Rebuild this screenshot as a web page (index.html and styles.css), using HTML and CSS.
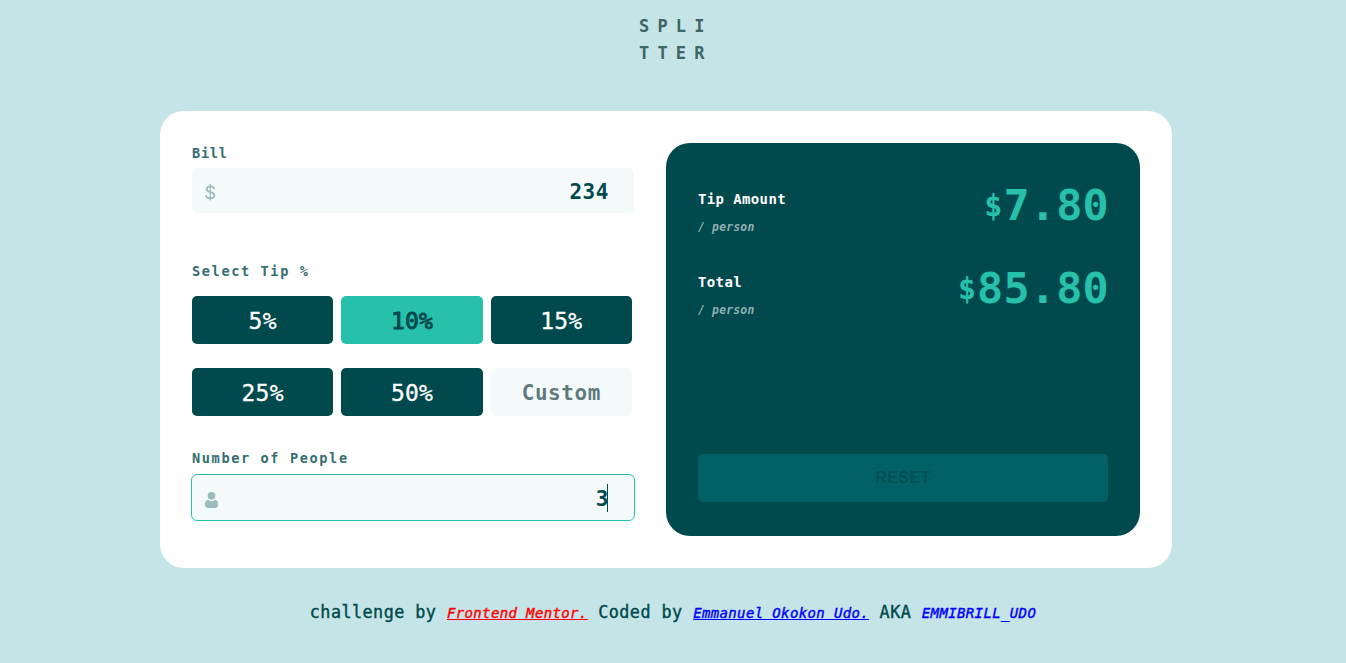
FILE: index.html
```html
<!DOCTYPE html>
<html lang="en">
<head>
<meta charset="utf-8">
<title>Splitter | Tip calculator</title>
<link rel="stylesheet" href="styles.css">
</head>
<body>
<header class="logo"><div>SPLI</div><div>TTER</div></header>
<main class="card">
  <section class="form">
    <div class="label label-bill">Bill</div>
    <div class="field">
      <svg class="dollar" width="11" height="17" viewBox="0 0 11 17"><path fill="none" stroke="#9dbbbd" stroke-width="1.9" d="M9.2 5.1C9.1 3.4 7.6 2.4 5.3 2.4S1.7 3.5 1.7 5.1c0 1.8 1.3 2.5 3.6 3 2.6.5 4 1.3 4 3.1 0 1.9-1.6 3-4 3S1.200 13 1.100 11.200"/><path fill="none" stroke="#9dbbbd" stroke-width="1.300" d="M5.300 0v16.500"/></svg>
      <span class="value">234</span>
    </div>
    <div class="label label-tip">Select Tip %</div>
    <div class="tips">
      <div class="tip">5%</div><div class="tip active">10%</div><div class="tip">15%</div>
      <div class="tip">25%</div><div class="tip">50%</div><div class="tip custom">Custom</div>
    </div>
    <div class="label label-people">Number of People</div>
    <div class="field focused">
      <svg class="person" width="13" height="16" viewBox="0 0 13 16"><path fill="#9dbbbd" d="M9.57 7.98c.67 0 1.24.1 1.71.34.47.24.83.58 1.1 1.05.26.45.43.96.51 1.54.08.57.11 1.2.11 1.88 0 .9-.27 1.65-.8 2.27-.53.62-1.19.94-1.93.94H2.73c-.75 0-1.4-.32-1.93-.94A3.39 3.39 0 0 1 0 12.8c0-.68.04-1.3.11-1.88.08-.58.25-1.09.51-1.54.27-.47.63-.81 1.1-1.05.47-.24 1.04-.35 1.71-.35A4.42 4.42 0 0 0 6.5 9.2a4.42 4.42 0 0 0 3.07-1.22zM6.5 0a3.85 3.85 0 1 1 0 7.7 3.85 3.85 0 0 1 0-7.7z"/></svg>
      <span class="value">3</span><span class="caret"></span>
    </div>
  </section>
  <section class="result">
    <div class="row">
      <div><div class="name">Tip Amount</div><div class="per">/ person</div></div>
      <div class="amount"><span class="currency">$</span>7.80</div>
    </div>
    <div class="row">
      <div><div class="name">Total</div><div class="per">/ person</div></div>
      <div class="amount"><span class="currency">$</span>85.80</div>
    </div>
    <div class="reset">RESET</div>
  </section>
</main>
<footer class="credit">challenge by <a class="mentor">Frontend Mentor.</a> Coded by <a class="author">Emmanuel Okokon Udo.</a> AKA <a class="alias">EMMIBRILL_UDO</a></footer>
</body>
</html>
```
FILE: styles.css
```css
* { box-sizing: border-box; letter-spacing: .0263em; }
body {
  margin: 0;
  height: 663px;
  overflow: hidden;
  background: #c5e4e7;
  color: #00494d;
  font-family: "DejaVu Sans Mono", monospace;
}
.logo {
  height: 111px;
  padding: 13px 0 0 639px;
  font: bold 17px/27px "DejaVu Sans Mono", monospace;
  color: #3d6666;
}
.logo div { letter-spacing: 8.2px; }
.card {
  display: flex;
  gap: 32px;
  width: 1012px;
  height: 457px;
  margin-left: 160px;
  padding: 32px;
  background: #fff;
  border-radius: 24px;
}
.form { width: 442px; }
.label {
  font-size: 13.6px;
  font-weight: bold;
  line-height: 20px;
  letter-spacing: 1.61px;
  color: #356e72;
}
.label-bill { letter-spacing: .75px; margin-bottom: 5px; }
.label-tip { margin: 48px 0 15px; }
.label-people { margin: 32px 0 7px; }
.field {
  display: flex;
  align-items: center;
  height: 45px;
  padding: 2px 25px 0 13px;
  background: #f4fafa;
  border-radius: 5px;
}
.focused { outline: 1px solid #26c0ab; }
.dollar { margin-top: 2px; }
.person { margin-top: 3px; }
.value {
  margin-left: auto;
  font-size: 21px;
  font-weight: bold;
  line-height: 28px;
}
.caret { width: 1px; height: 28px; margin: -2px 1px 0 -2px; background: #00494d; }
.tips {
  display: grid;
  grid-template-columns: repeat(3, 1fr);
  column-gap: 8px;
  row-gap: 24px;
  width: 440px;
}
.tip {
  height: 48px;
  border-radius: 5px;
  background: #00494d;
  color: #fff;
  font-size: 23px;
  line-height: 51px;
  letter-spacing: .23px;
  text-align: center;
  -webkit-text-stroke: .3px;
}
.active {
  background: #26c0ab;
  color: #00494d;
  -webkit-text-stroke: .9px;
}
.custom {
  background: #f4fafa;
  color: #5e7a7d;
  font-size: 21px;
  font-weight: bold;
  letter-spacing: .56px;
  -webkit-text-stroke: 0;
}
.result {
  display: flex;
  flex-direction: column;
  width: 474px;
  padding: 44px 32px 34px;
  background: #00494d;
  border-radius: 24px;
}
.row { display: flex; justify-content: space-between; height: 82.5px; }
.name { color: #fff; font-size: 14px; font-weight: bold; line-height: 24px; }
.per {
  margin-top: 4px;
  color: #8fb0b2;
  font-size: 11.4px;
  font-style: italic;
  font-weight: bold;
  line-height: 24px;
  letter-spacing: .2px;
}
.amount {
  margin-right: -1px;
  font-size: 43.5px;
  line-height: 37px;
  letter-spacing: .2px;
  font-weight: bold;
  color: #26c0ab;
}
.currency { position: relative; top: -4px; left: -1px; font-size: 30px; letter-spacing: .1px; }
.reset {
  height: 48px;
  margin-top: auto;
  border-radius: 5px;
  background: #006166;
  color: #004f53;
  font: bold 16px/47px "Liberation Sans", sans-serif;
  text-align: center;
}
.credit {
  margin-top: 29px;
  text-align: center;
  font-size: 16.8px;
  line-height: 30px;
  -webkit-text-stroke: .4px;
}
.credit a { font-size: 14px; font-style: italic; color: #00f; }
.credit .mentor { color: #f00; }
.mentor, .author { text-decoration: underline; }
```
